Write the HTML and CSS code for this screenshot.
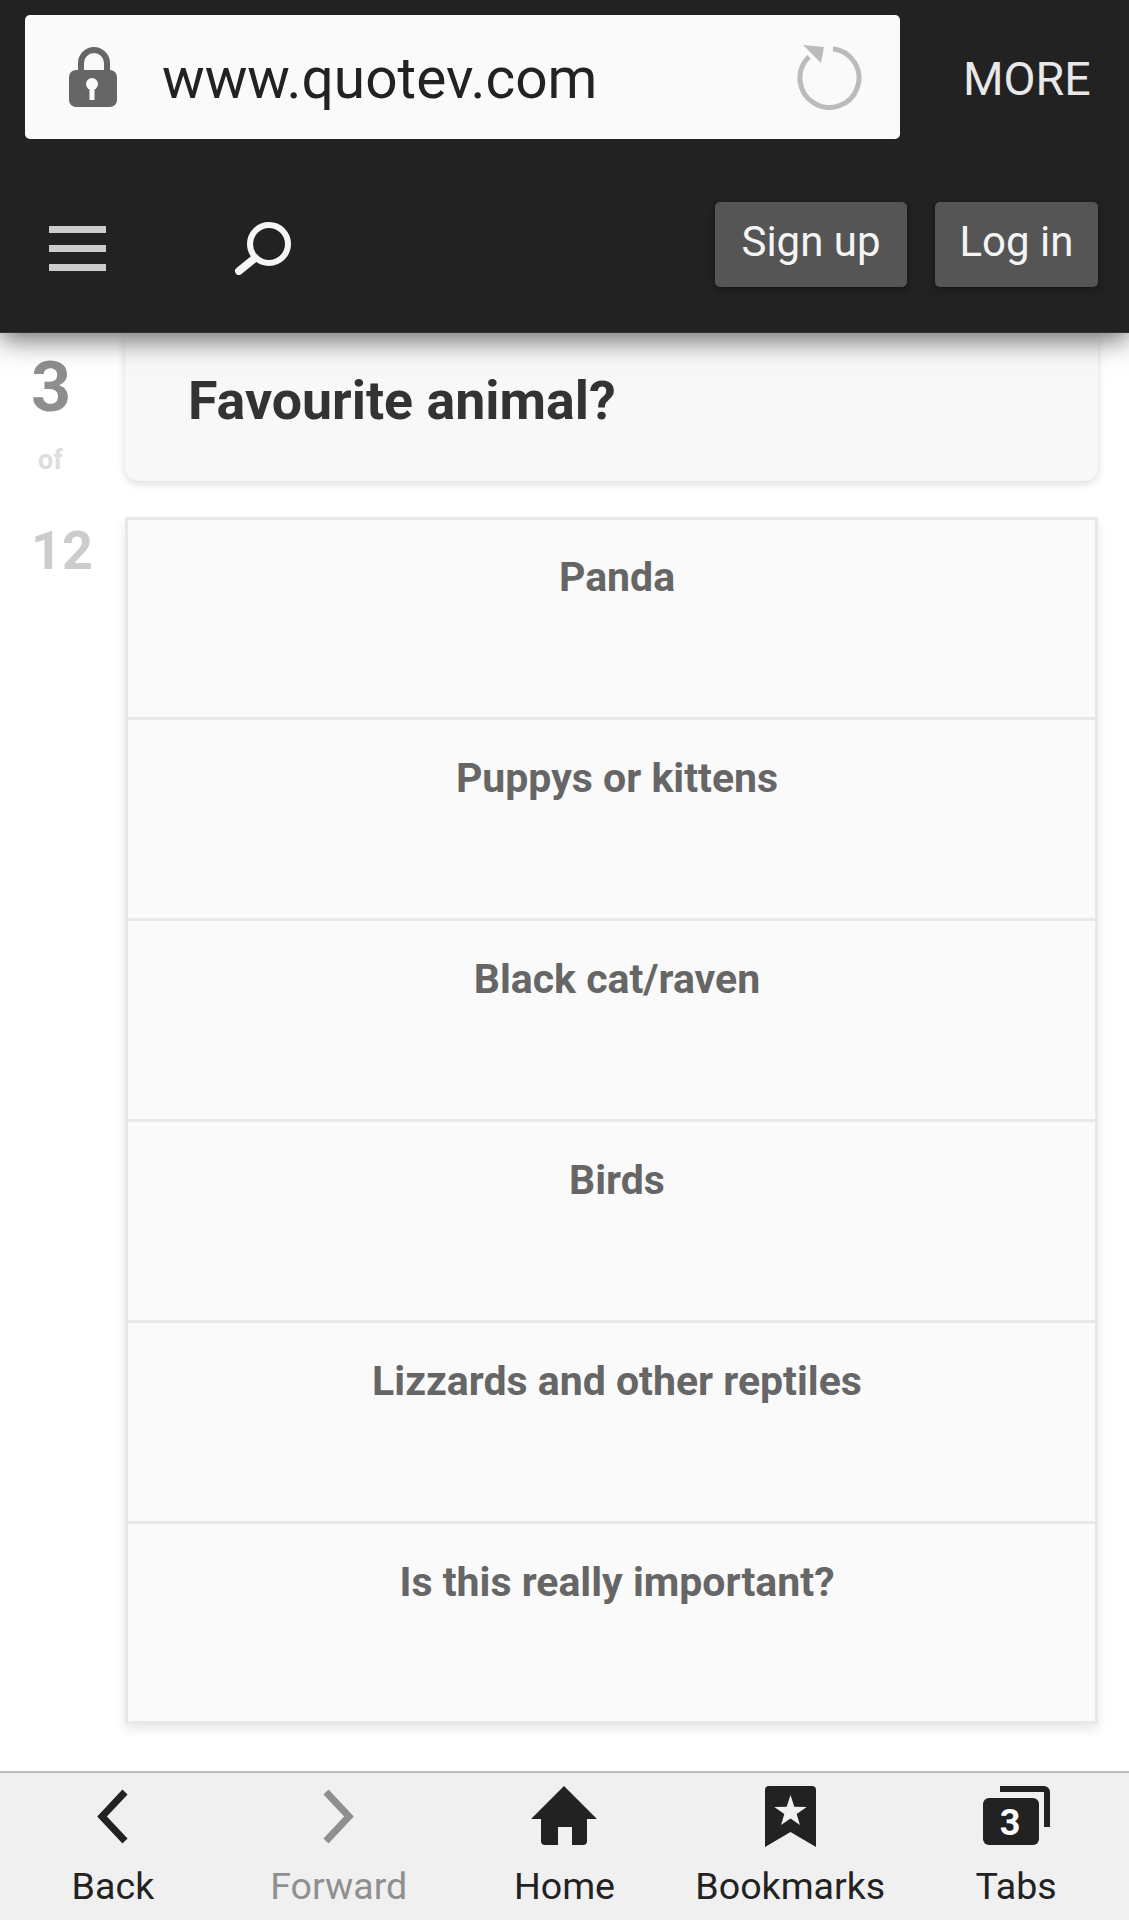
FILE: index.html
```html
<!DOCTYPE html>
<html lang="en">
<head>
<meta charset="utf-8">
<title>Quotev</title>
<link rel="stylesheet" href="styles.css">
</head>
<body>
<div class="page">
  <header class="top">
    <div class="browser-row">
      <div class="url-bar">
        <svg class="lock" viewBox="0 0 48 60"><path class="shackle" d="M12 26V16a13 13 0 0 1 26 0V26"/><rect class="lock-body" x="0" y="23" width="48" height="37" rx="7"/><circle class="keyhole" cx="23" cy="37" r="6"/><rect class="keyhole" x="20.5" y="38" width="5" height="15"/></svg>
        <span class="url">www.quotev.com</span>
        <svg class="reload" viewBox="0 0 65 65"><path class="reload-arc" d="M36 3.7A29.5 29.5 0 1 1 12 11.7"/><polygon class="reload-head" points="6,0 27,2 24,18"/></svg>
      </div>
      <span class="more">MORE</span>
    </div>
    <div class="site-row">
      <div class="burger"><i></i><i></i><i></i></div>
      <svg class="search" viewBox="0 0 57 53"><circle class="search-ring" cx="35" cy="22" r="19"/><line class="search-handle" x1="21" y1="36" x2="5" y2="49"/></svg>
      <a class="btn btn-signup">Sign up</a>
      <a class="btn btn-login">Log in</a>
    </div>
  </header>

  <main class="quiz">
    <aside class="counter">
      <div class="count-current">3</div>
      <div class="count-of">of</div>
      <div class="count-total">12</div>
    </aside>
    <section class="content">
      <div class="question">Favourite animal?</div>
      <ul class="answers">
        <li>Panda</li>
        <li>Puppys or kittens</li>
        <li>Black cat/raven</li>
        <li>Birds</li>
        <li>Lizzards and other reptiles</li>
        <li>Is this really important?</li>
      </ul>
    </section>
  </main>

  <nav class="bottom">
    <a class="nav-item">
      <span class="nav-icon"><svg class="ic-chev" viewBox="0 0 31 55"><polyline class="chev" points="28,3 5,27.5 28,52"/></svg></span>
      <span>Back</span>
    </a>
    <a class="nav-item nav-off">
      <span class="nav-icon"><svg class="ic-chev" viewBox="0 0 31 55"><polyline class="chev" points="3,3 26,27.5 3,52"/></svg></span>
      <span>Forward</span>
    </a>
    <a class="nav-item">
      <span class="nav-icon"><svg class="ic-home" viewBox="0 0 66 59"><path class="solid" d="M33 0L66 33H56V55a4 4 0 0 1-4 4H41V41H27V59H14a4 4 0 0 1-4-4V33H0Z"/></svg></span>
      <span>Home</span>
    </a>
    <a class="nav-item">
      <span class="nav-icon"><svg class="ic-book" viewBox="0 0 51 61"><path class="solid" d="M4 0H47a4 4 0 0 1 4 4V61L25.5 46 0 61V4a4 4 0 0 1 4-4Z"/><polygon class="star" points="25.5,9 29.3,20.7 41.7,21.1 31.7,28 34.9,38.9 25.5,32.5 16.1,38.9 19.3,28 9.3,21.1 21.7,20.7"/></svg></span>
      <span>Bookmarks</span>
    </a>
    <a class="nav-item">
      <span class="nav-icon"><svg class="ic-tabs" viewBox="0 0 67 59"><path class="solid" d="M17 0H61a6 6 0 0 1 6 6V41H61V6H17Z"/><rect class="solid" x="0" y="12" width="56" height="47" rx="6"/><text class="tabs-num" x="27" y="49">3</text></svg></span>
      <span>Tabs</span>
    </a>
  </nav>
</div>
</body>
</html>
```

FILE: styles.css
```css
* { box-sizing: border-box; }
html, body { margin: 0; padding: 0; }
body { font-family: Roboto, "Liberation Sans", sans-serif; background: #fff; color: #222; }
.page { width: 1129px; height: 1920px; display: flex; flex-direction: column; overflow: hidden; }
svg { display: block; }

.top { position: relative; z-index: 2; height: 333px; background: #222; box-shadow: 0 6px 26px rgba(0,0,0,.6); border-bottom: 1px solid #333; padding-top: 15px; }
.browser-row { display: flex; align-items: center; height: 124px; padding-left: 25px; }
.url-bar { width: 875px; height: 124px; background: #fafafa; border-radius: 5px; display: flex; align-items: center; padding: 0 38px 0 44px; }
.lock { width: 48px; height: 60px; flex: none; }
.shackle { fill: none; stroke: #666; stroke-width: 6; }
.lock-body { fill: #666; }
.keyhole { fill: #fafafa; }
.url { font-size: 56.8px; color: #222; margin-left: 45px; flex: 1; line-height: 1; margin-top: 4px; }
.reload { width: 65px; height: 65px; flex: none; }
.reload-arc { fill: none; stroke: #bbb; stroke-width: 5; }
.reload-head { fill: #bbb; }
.more { margin-left: 63px; font-size: 46.5px; font-weight: 400; color: #e8e8e8; line-height: 1; margin-top: 4px; }

.site-row { display: flex; align-items: center; margin-top: 63px; height: 85px; padding: 0 31px 0 49px; }
.burger { width: 57px; display: flex; flex-direction: column; gap: 12px; margin-top: 8px; }
.burger i { display: block; height: 7px; background: #ccc; }
.search { width: 57px; height: 53px; margin: 8px auto 0 128px; }
.search-ring { fill: none; stroke: #f5f5f5; stroke-width: 6; }
.search-handle { stroke: #f5f5f5; stroke-width: 8; stroke-linecap: round; }
.btn { height: 85px; background: #555; color: #f4f4f4; border-radius: 5px; display: flex; align-items: center; justify-content: center; font-size: 42px; box-shadow: 0 2px 6px rgba(0,0,0,.4); padding-bottom: 6px; }
.btn-signup { width: 192px; }
.btn-login { width: 163px; margin-left: 28px; }

.quiz { flex: 1; display: grid; grid-template-columns: 125px 1fr; padding-right: 31px; min-height: 0; }
.counter { padding-left: 31px; font-weight: 700; }
.count-current { font-size: 70px; line-height: 71px; color: #8e8e8e; margin-top: 19px; }
.count-of { font-size: 27px; line-height: 32px; color: #ddd; margin-top: 21px; margin-left: 7px; }
.count-total { font-size: 54px; line-height: 54px; color: #ccc; margin-top: 48px; margin-left: 0; }

.question { height: 148px; background: #f8f8f8; border-radius: 0 0 14px 14px; box-shadow: 0 3px 8px rgba(0,0,0,.14); padding: 36px 0 0 63px; font-size: 53.7px; line-height: 64px; font-weight: 700; color: #333; }
.answers { list-style: none; margin: 36px 0 0 0; padding: 0; background: #fafafa; border: 3px solid #e8e8e8; box-shadow: 0 5px 10px rgba(0,0,0,.1); }
.answers li { height: 201px; padding: 33px 0 0 11px; text-align: center; font-size: 41px; line-height: 50px; font-weight: 700; color: #666; border-top: 3px solid #e8e8e8; }
.answers li:first-child { height: 197px; padding-top: 32px; border-top: 0; }
.answers li:last-child { height: 200px; }

.bottom { height: 149px; flex: none; background: #f0f0f0; border-top: 2px solid #bbb; display: grid; grid-template-columns: repeat(5, 1fr); }
.nav-item { display: flex; flex-direction: column; align-items: center; font-size: 37.6px; line-height: 44px; color: #222; }
.nav-off { color: #8f8f8f; }
.nav-icon { height: 61px; margin-top: 13px; margin-bottom: 17px; display: flex; align-items: center; justify-content: center; }
.ic-chev { width: 31px; height: 55px; }
.ic-home { width: 66px; height: 59px; margin-top: -2px; }
.ic-book { width: 51px; height: 61px; }
.ic-tabs { width: 67px; height: 59px; margin-top: -2px; }
.chev { fill: none; stroke: #222; stroke-width: 7; }
.nav-off .chev { stroke: #8f8f8f; }
.solid { fill: #222; }
.star { fill: #f0f0f0; }
.tabs-num { fill: #fff; font-size: 36px; font-weight: 700; text-anchor: middle; }
```
